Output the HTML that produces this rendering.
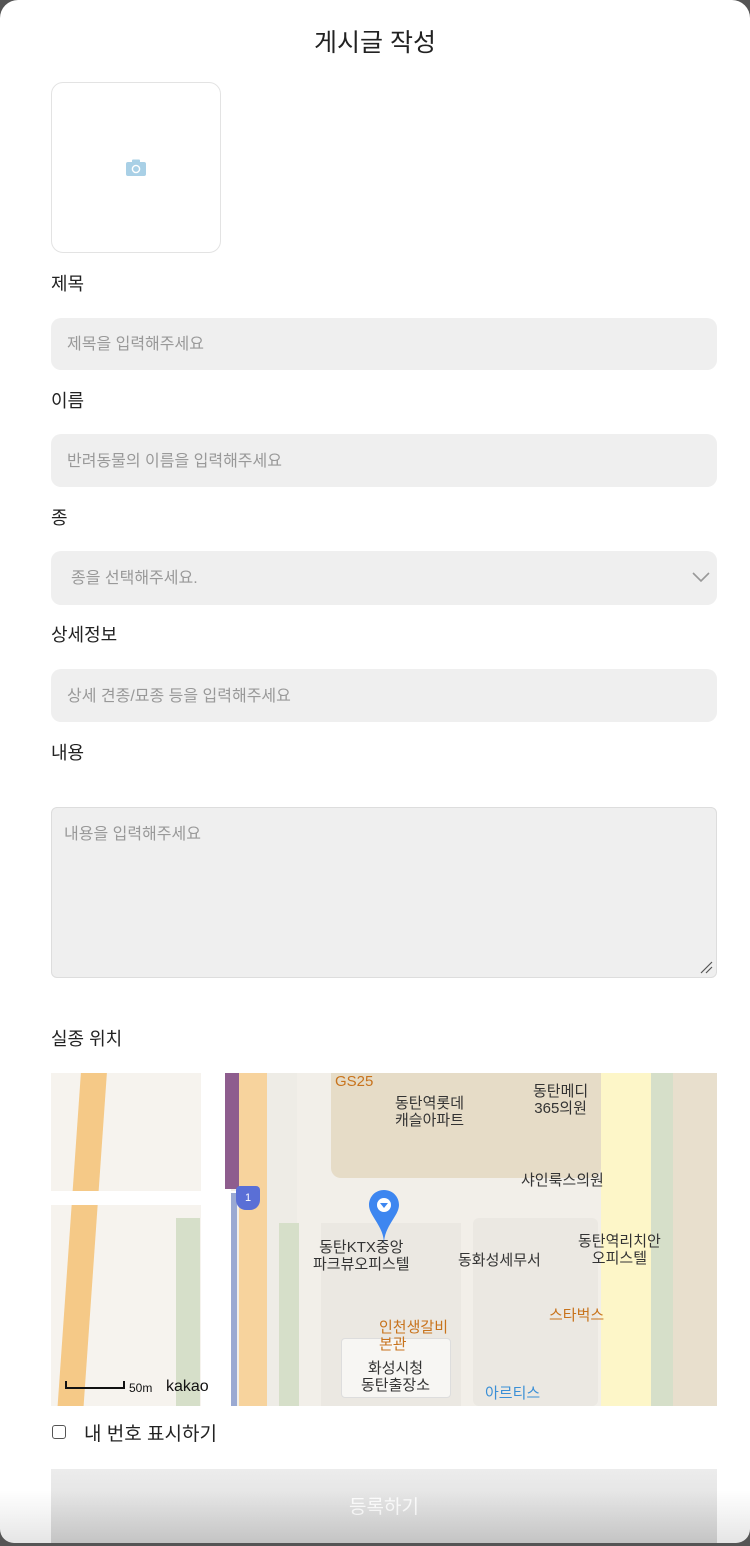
<!DOCTYPE html>
<html><head><meta charset="utf-8"><style>
*{box-sizing:border-box;margin:0;padding:0}
html,body{width:750px;height:1546px;overflow:hidden;background:#555}
body{font-family:"Liberation Sans","Noto Sans CJK KR",sans-serif;color:#222}
.page{position:absolute;left:0;top:0;width:750px;height:1543px;background:#fff;border-radius:18px 18px 14px 14px;overflow:hidden}
.abs{position:absolute}
h1{position:absolute;top:23px;width:100%;text-align:center;font-size:25px;font-weight:400;color:#222}
.photo{left:51px;top:82px;width:170px;height:171px;border:1px solid #e3e3e3;border-radius:12px}
.lbl{position:absolute;left:51px;font-size:18px;color:#222}
.inp{position:absolute;left:51px;width:666px;background:#efefef;border-radius:10px;font-size:16px;color:#999;padding-left:16px;padding-bottom:4px;display:flex;align-items:center}
.map{left:51px;top:1073px;width:666px;height:333px;background:#f2efe9;overflow:hidden}
.m{position:absolute}
.t{position:absolute;font-size:15px;color:#333;line-height:17px;text-align:center}
.o{color:#c8731c}
</style></head><body><div class="page">
<h1>게시글 작성</h1>
<div class="abs photo"><svg class="abs" style="left:73px;top:76px" width="22" height="18" viewBox="0 0 22 18"><rect x="1" y="3" width="20" height="14" rx="2" fill="#a9d0e6"/><rect x="7" y="0.5" width="8" height="4" rx="1" fill="#a9d0e6"/><circle cx="11" cy="10" r="3.6" fill="none" stroke="#fff" stroke-width="1.4"/></svg></div>
<div class="lbl" style="top:270px">제목</div>
<div class="inp" style="top:318px;height:52px">제목을 입력해주세요</div>
<div class="lbl" style="top:387px">이름</div>
<div class="inp" style="top:434px;height:53px">반려동물의 이름을 입력해주세요</div>
<div class="lbl" style="top:504px">종</div>
<div class="inp" style="top:551px;height:54px;padding-left:20px">종을 선택해주세요.<svg class="abs" style="right:6px;top:20px" width="20" height="12" viewBox="0 0 20 12"><path d="M2 2 L10 10 L18 2" fill="none" stroke="#999" stroke-width="1.6"/></svg></div>
<div class="lbl" style="top:621px">상세정보</div>
<div class="inp" style="top:669px;height:53px">상세 견종/묘종 등을 입력해주세요</div>
<div class="lbl" style="top:739px">내용</div>
<div class="inp" style="top:807px;height:171px;align-items:flex-start;padding-top:12px;padding-left:12px;border:1px solid #ddd;border-radius:6px">내용을 입력해주세요<svg class="abs" style="right:3px;bottom:3px" width="14" height="14"><path d="M2 13 L13 2 M7 13 L13 7" stroke="#555" stroke-width="1.2"/></svg></div>
<div class="lbl" style="top:1025px">실종 위치</div>
<div class="abs map">
 <div class="m" style="left:0;top:0;width:150px;height:333px;background:#f6f3ee"></div>
 <div class="m" style="left:18px;top:-10px;width:26px;height:360px;background:#f5c987;transform:skewX(-4deg)"></div>
 <div class="m" style="left:0;top:118px;width:240px;height:14px;background:#fff"></div>
 <div class="m" style="left:150px;top:0;width:30px;height:333px;background:#fff"></div>
 <div class="m" style="left:125px;top:145px;width:24px;height:188px;background:#d6dfc9"></div>
 <div class="m" style="left:174px;top:0;width:19px;height:116px;background:#8e5d8e"></div>
 <div class="m" style="left:180px;top:120px;width:6px;height:213px;background:#9aa9d2"></div>
 <div class="m" style="left:188px;top:0;width:28px;height:333px;background:#f7d39d"></div>
 <div class="m" style="left:185px;top:113px;width:24px;height:24px;background:#5a6fd6;border-radius:4px 4px 10px 10px;color:#fff;font-size:11px;text-align:center;line-height:24px">1</div>
 <div class="m" style="left:216px;top:0;width:30px;height:333px;background:#eeece6"></div>
 <div class="m" style="left:228px;top:150px;width:20px;height:183px;background:#d6dfc9"></div>
 <div class="m" style="left:280px;top:0;width:270px;height:105px;background:#e6dcc7;border-radius:0 0 10px 10px"></div>
 <div class="m" style="left:270px;top:150px;width:140px;height:183px;background:#ebe8e2"></div>
 <div class="m" style="left:290px;top:265px;width:110px;height:60px;background:#f7f6f3;border:1px solid #ddd;border-radius:4px"></div>
 <div class="m" style="left:422px;top:145px;width:125px;height:188px;background:#ebe8e2;border-radius:6px"></div>
 <div class="m" style="left:550px;top:0;width:50px;height:333px;background:#fdf6c8"></div>
 <div class="m" style="left:600px;top:0;width:22px;height:333px;background:#d6dfc9"></div>
 <div class="m" style="left:622px;top:0;width:44px;height:333px;background:#e8dfcd"></div>
 <div class="t o" style="left:284px;top:0">GS25</div>
 <div class="t" style="left:344px;top:22px">동탄역롯데<br>캐슬아파트</div>
 <div class="t" style="left:482px;top:10px">동탄메디<br>365의원</div>
 <div class="t" style="left:470px;top:99px">샤인룩스의원</div>
 <div class="t" style="left:262px;top:166px">동탄KTX중앙<br>파크뷰오피스텔</div>
 <div class="t" style="left:407px;top:179px">동화성세무서</div>
 <div class="t" style="left:527px;top:160px">동탄역리치안<br>오피스텔</div>
 <div class="t o" style="left:498px;top:234px">스타벅스</div>
 <div class="t o" style="left:328px;top:246px;text-align:left">인천생갈비<br>본관</div>
 <div class="t" style="left:310px;top:287px">화성시청<br>동탄출장소</div>
 <div class="t" style="left:434px;top:312px;color:#3a8fd6">아르티스</div>
 <svg class="m" style="left:316px;top:115px" width="34" height="58" viewBox="0 0 34 58"><path d="M17 2 C8 2 2 9 2 17 C2 28 17 38 17 56 C17 38 32 28 32 17 C32 9 26 2 17 2Z" fill="#3d86f0"/><circle cx="17" cy="17" r="7" fill="#fff"/><path d="M13 15 L21 15 L17 20Z" fill="#3d86f0"/></svg>
 <div class="m" style="left:14px;top:308px;width:60px;height:8px;border:2px solid #111;border-top:none"></div>
 <div class="t" style="left:78px;top:307px;font-size:12px;color:#111">50m</div>
 <div class="t" style="left:115px;top:305px;font-size:16px;color:#111">kakao</div>
</div>
<div class="abs" style="left:52px;top:1425px;width:14px;height:14px;border:1px solid #555;border-radius:3px"></div>
<div class="lbl" style="left:84px;top:1419px;font-size:19px">내 번호 표시하기</div>
<div class="abs" style="left:51px;top:1469px;width:666px;height:80px;background:linear-gradient(#ececec,#d9d9d9);color:#fff;font-size:19px;text-align:center;padding-top:23px">등록하기</div>
<div class="abs" style="left:0;top:1490px;width:750px;height:53px;background:linear-gradient(rgba(0,0,0,0),rgba(0,0,0,0.1))"></div>
</div></body></html>
